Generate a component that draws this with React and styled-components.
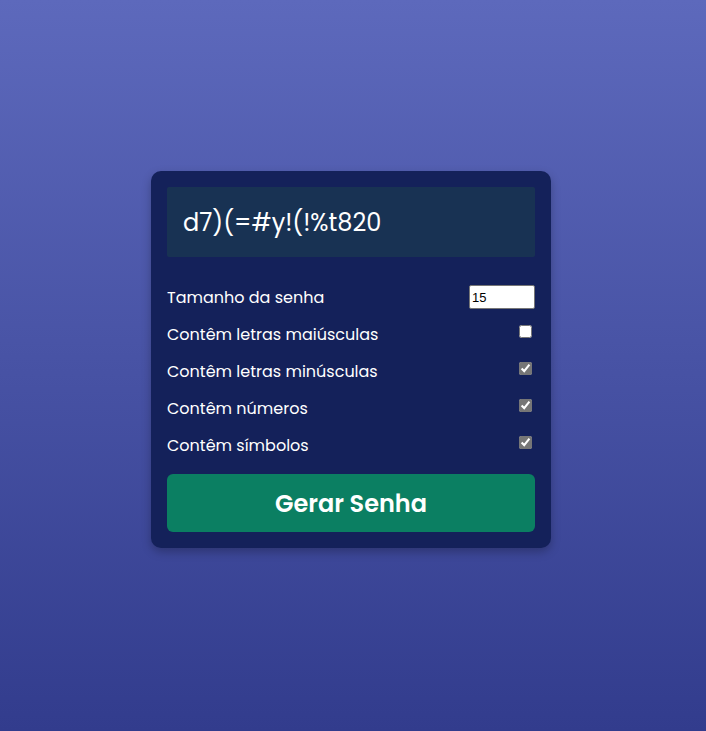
import React, { useState } from 'react';
import styled, { createGlobalStyle } from 'styled-components';

const GlobalStyle = createGlobalStyle`
  * {
    box-sizing: border-box;
  }
  html, body {
    margin: 0;
    padding: 0;
  }
  body {
    min-height: 100vh;
    font-family: Poppins, 'Open Sans', 'Liberation Sans', sans-serif;
    background: linear-gradient(to bottom, #5d69bc, #323c8d);
  }
`;

const options = [
  { key: 'upper', label: 'Contêm letras maiúsculas', checked: false },
  { key: 'lower', label: 'Contêm letras minúsculas', checked: true },
  { key: 'numbers', label: 'Contêm números', checked: true },
  { key: 'symbols', label: 'Contêm símbolos', checked: true },
];

const App = () => {
  const [length, setLength] = useState(15);
  const [checks, setChecks] = useState(
    Object.fromEntries(options.map((o) => [o.key, o.checked]))
  );

  return (
    <Page>
      <GlobalStyle />
      <Card>
        <Result>d7)(=#y!(!%t820</Result>
        <Settings>
          <Row>
            <Label>Tamanho da senha</Label>
            <LengthInput
              type='number'
              value={length}
              onChange={(e) => setLength(e.target.value)}
            />
          </Row>
          {options.map((o) => (
            <Row key={o.key}>
              <Label>{o.label}</Label>
              <Check
                type='checkbox'
                checked={checks[o.key]}
                onChange={() =>
                  setChecks({ ...checks, [o.key]: !checks[o.key] })
                }
              />
            </Row>
          ))}
        </Settings>
        <GenerateButton>Gerar Senha</GenerateButton>
      </Card>
    </Page>
  );
};

export default App;

const Page = styled.div`
  min-height: 731px;
  display: flex;
  justify-content: center;
  padding-top: 171px;
  padding-right: 4px;
`;

const Card = styled.div`
  width: 400px;
  align-self: flex-start;
  background: #14215a;
  border-radius: 10px;
  padding: 16px;
  box-shadow: 0 4px 10px rgba(0, 0, 0, 0.25);
`;

const Result = styled.div`
  height: 70px;
  background: #183253;
  border-radius: 2px;
  color: #ffffff;
  font-size: 24px;
  display: flex;
  align-items: center;
  padding: 0 16px;
`;

const Settings = styled.div`
  display: flex;
  flex-direction: column;
  gap: 13px;
  margin-top: 28px;
`;

const Row = styled.div`
  display: flex;
  align-items: center;
  justify-content: space-between;
  height: 24px;
`;

const Label = styled.span`
  color: #ffffff;
  font-size: 16px;
`;

const LengthInput = styled.input`
  width: 66px;
  height: 24px;
  border: 1px solid #767676;
  border-radius: 2px;
  font-family: 'Liberation Sans', Arial, sans-serif;
  font-size: 13px;
  padding: 1px 2px;
  color: #000;
  -moz-appearance: textfield;
  &::-webkit-inner-spin-button,
  &::-webkit-outer-spin-button {
    -webkit-appearance: none;
    margin: 0;
  }
`;

const Check = styled.input`
  width: 13px;
  height: 13px;
  margin: 0 3px 6px 0;
  accent-color: #767676;
`;

const GenerateButton = styled.button`
  display: block;
  width: 100%;
  height: 58px;
  margin-top: 17px;
  border: none;
  border-radius: 6px;
  background: #0b7f62;
  color: #ffffff;
  font-family: Poppins, 'Open Sans', 'Liberation Sans', sans-serif;
  font-size: 24px;
  font-weight: 600;
  cursor: pointer;
`;
